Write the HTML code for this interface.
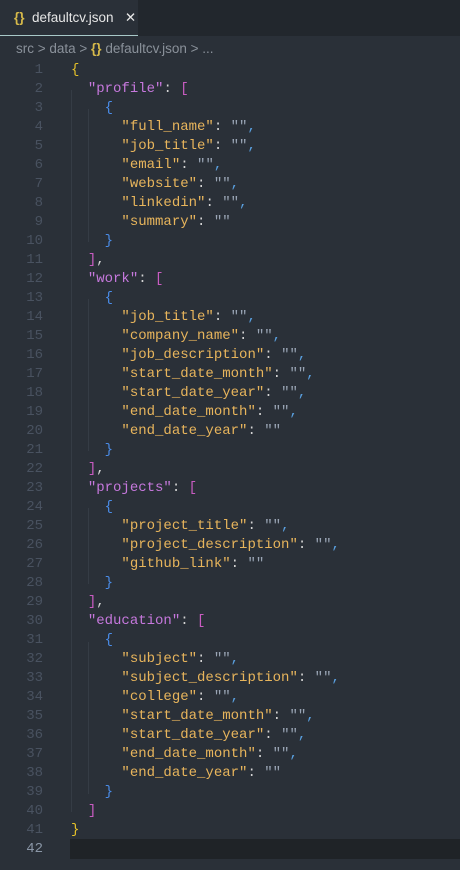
<!DOCTYPE html>
<html><head><style>
body{margin:0;width:460px;height:870px;background:#2a3038;overflow:hidden;font-family:"Liberation Sans",sans-serif}
.top{height:36px;background:#22272d;position:relative}
.tab{position:absolute;left:0;top:0;width:138px;height:36px;background:#2a3038;border-bottom:1px solid #a8c8c8;box-sizing:border-box;color:#e6e6e6;font-size:13.5px;line-height:36px;padding-left:14px;white-space:nowrap}
.br{position:absolute;top:36px;left:16px;font-size:13.5px;color:#8a919a;line-height:26px}
.y{color:#d7ba4a;font-weight:bold}
.code{position:absolute;top:61px;left:0;right:0;font-family:"Liberation Mono",monospace;font-size:14px;line-height:19px;white-space:pre}
.ln{position:absolute;left:0;width:43px;text-align:right;color:#495260}
.l{position:absolute;left:71px;color:#d4d4d4}
.k{color:#e8b55c}.p{color:#c678dd}.s{color:#9aa5b5}.c{color:#5aa0e0}
.b1{color:#e6c22a}.b2{color:#c95cc2}.b3{color:#4a8ce8}
.cur{position:absolute;left:70px;right:0;top:839px;height:20px;background:#1f2327}
.g{position:absolute;width:1px;background:#353c45}
</style></head><body>
<div class="top"><div class="tab"><span class="y">{}</span>&nbsp; defaultcv.json &nbsp;&nbsp;✕</div></div>
<div class="br">src &gt; data &gt; <span class="y">{}</span> defaultcv.json &gt; ...</div>
<div class="cur"></div>
<div class="g" style="left:71px;top:90px;height:722px"></div>
<div class="g" style="left:88px;top:109px;height:133px"></div>
<div class="g" style="left:88px;top:299px;height:152px"></div>
<div class="g" style="left:88px;top:508px;height:76px"></div>
<div class="g" style="left:88px;top:642px;height:152px"></div>
<div class="code" id="c"></div>
<script>
const L=[
'<span class="b1">{</span>',
'  <span class="p">"profile"</span>: <span class="b2">[</span>',
'    <span class="b3">{</span>',
'K full_name,','K job_title,','K email,','K website,','K linkedin,','K summary',
'    <span class="b3">}</span>','  <span class="b2">]</span>,',
'  <span class="p">"work"</span>: <span class="b2">[</span>','    <span class="b3">{</span>',
'K job_title,','K company_name,','K job_description,','K start_date_month,','K start_date_year,','K end_date_month,','K end_date_year',
'    <span class="b3">}</span>','  <span class="b2">]</span>,',
'  <span class="p">"projects"</span>: <span class="b2">[</span>','    <span class="b3">{</span>',
'K project_title,','K project_description,','K github_link',
'    <span class="b3">}</span>','  <span class="b2">]</span>,',
'  <span class="p">"education"</span>: <span class="b2">[</span>','    <span class="b3">{</span>',
'K subject,','K subject_description,','K college,','K start_date_month,','K start_date_year,','K end_date_month,','K end_date_year',
'    <span class="b3">}</span>','  <span class="b2">]</span>','<span class="b1">}</span>',''];
let h='';
L.forEach((t,i)=>{
 if(t.startsWith('K ')){let n=t.slice(2),c=n.endsWith(',');n=n.replace(',','');
  t='      <span class="k">"'+n+'"</span>: <span class="s">""</span>'+(c?'<span class="c">,</span>':'');}
 h+='<div class="ln" style="top:'+(i*19)+'px'+(i==41?';color:#8a96a6':'')+'">'+(i+1)+'</div><div class="l" style="top:'+(i*19)+'px">'+t+'</div>';
});
document.getElementById('c').innerHTML=h;
</script>
</body></html>
